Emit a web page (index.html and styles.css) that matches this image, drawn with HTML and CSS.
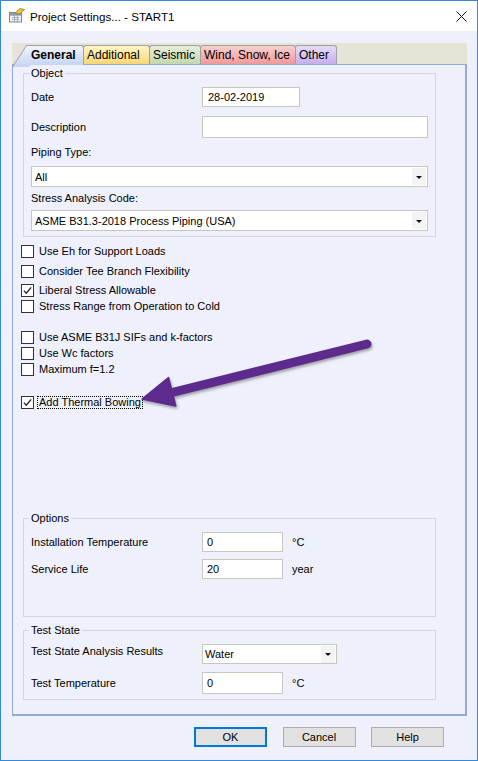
FILE: index.html
```html
<!DOCTYPE html>
<html>
<head>
<meta charset="utf-8">
<title>Project Settings</title>
<link rel="stylesheet" href="styles.css">
</head>
<body>
<div class="window">
  <div class="titlebar">
    <svg class="appicon" viewBox="0 0 17 16" width="17" height="16">
      <rect x="1.5" y="5.5" width="12" height="9.5" fill="#eef0f4" stroke="#7d8593"/>
      <rect x="1.5" y="5.5" width="12" height="2.5" fill="#9aa6b8" stroke="#7d8593"/>
      <path d="M4 10.5h7M4 12.5h7M6.5 8v7M9.5 8v7" stroke="#9aa3b2" stroke-width="0.8"/>
      <path d="M7 6 L12 1.5 L16.5 2.5 L11.5 7 Z" fill="#f2c531" stroke="#a07a12" stroke-width="0.8"/>
    </svg>
    <span class="title">Project Settings... - START1</span>
    <svg class="close" viewBox="0 0 11 11" width="11" height="11">
      <path d="M0.5 0.5L10.5 10.5M10.5 0.5L0.5 10.5" stroke="#111" stroke-width="1"/>
    </svg>
  </div>

  <div class="client">
    <div class="tabstrip">
      <div class="tab tab-general">General</div>
      <div class="tab tab-additional">Additional</div>
      <div class="tab tab-seismic">Seismic</div>
      <div class="tab tab-wind">Wind, Snow, Ice</div>
      <div class="tab tab-other">Other</div>
    </div>

    <div class="panel">
      <fieldset class="group group-object">
        <legend>Object</legend>
        <div class="row row-date">
          <span class="lbl">Date</span>
          <div class="input input-date">28-02-2019</div>
        </div>
        <div class="row row-desc">
          <span class="lbl">Description</span>
          <div class="input input-desc"></div>
        </div>
        <div class="caption caption-piping">Piping Type:</div>
        <div class="select select-wide"><span class="sel-text">All</span><span class="sel-btn"><span class="tri"></span></span></div>
        <div class="caption caption-code">Stress Analysis Code:</div>
        <div class="select select-wide select-code"><span class="sel-text">ASME B31.3-2018 Process Piping (USA)</span><span class="sel-btn"><span class="tri"></span></span></div>
      </fieldset>

      <div class="checks">
        <div class="check c1"><span class="box"></span><span>Use Eh for Support Loads</span></div>
        <div class="check c2"><span class="box"></span><span>Consider Tee Branch Flexibility</span></div>
        <div class="check c3"><span class="box"><svg viewBox="0 0 11 11" width="11" height="11"><path d="M1.8 5.6L4.3 8.2L9.2 2.4" fill="none" stroke="#222" stroke-width="1.3"/></svg></span><span>Liberal Stress Allowable</span></div>
        <div class="check c4"><span class="box"></span><span>Stress Range from Operation to Cold</span></div>
        <div class="check c5"><span class="box"></span><span>Use ASME B31J SIFs and k-factors</span></div>
        <div class="check c6"><span class="box"></span><span>Use Wc factors</span></div>
        <div class="check c7"><span class="box"></span><span>Maximum f=1.2</span></div>
        <div class="check c8"><span class="box"><svg viewBox="0 0 11 11" width="11" height="11"><path d="M1.8 5.6L4.3 8.2L9.2 2.4" fill="none" stroke="#222" stroke-width="1.3"/></svg></span><span class="focus">Add Thermal Bowing</span></div>
      </div>

      <fieldset class="group group-options">
        <legend>Options</legend>
        <div class="row row-install">
          <span class="lbl">Installation Temperature</span>
          <div class="input input-num">0</div>
          <span class="unit">°C</span>
        </div>
        <div class="row row-life">
          <span class="lbl">Service Life</span>
          <div class="input input-num">20</div>
          <span class="unit">year</span>
        </div>
      </fieldset>

      <fieldset class="group group-test">
        <legend>Test State</legend>
        <div class="row row-results">
          <span class="lbl lbl-top">Test State Analysis Results</span>
          <div class="select select-water"><span class="sel-text">Water</span><span class="sel-btn"><span class="tri"></span></span></div>
        </div>
        <div class="row row-testtemp">
          <span class="lbl">Test Temperature</span>
          <div class="input input-num input-tall">0</div>
          <span class="unit">°C</span>
        </div>
      </fieldset>
    </div>

    <div class="buttons">
      <div class="btn btn-default">OK</div>
      <div class="btn">Cancel</div>
      <div class="btn">Help</div>
    </div>
  </div>

  <svg class="arrow" viewBox="0 0 478 761" width="478" height="761">
    <g class="arrow-shape">
      <line x1="367" y1="344" x2="170" y2="393" stroke="#5d2a8d" stroke-width="9" stroke-linecap="round"/>
      <polygon points="142,399 168.5,377.5 175.8,406" fill="#5d2a8d" stroke="#5d2a8d" stroke-width="1.5" stroke-linejoin="round"/>
    </g>
  </svg>
</div>
</body>
</html>
```
FILE: styles.css
```css
* { box-sizing: border-box; }

html, body {
  margin: 0;
  padding: 0;
}

body {
  width: 478px;
  height: 761px;
  overflow: hidden;
  font-family: "Liberation Sans", Arial, sans-serif;
  font-size: 11px;
  color: #000;
  background: #ffffff;
}

.window {
  position: relative;
  width: 478px;
  height: 761px;
  border: 1px solid #3388d8;
  background: #eef0fb;
}

/* title bar */
.titlebar {
  height: 30px;
  background: #ffffff;
  display: flex;
  align-items: center;
  padding-left: 7px;
}

.appicon {
  display: block;
  margin-right: 5px;
  margin-top: -2px;
}

.title {
  flex: 1;
  font-size: 11.6px;
  color: #000;
}

.close {
  display: block;
  margin-right: 10px;
}

/* client area */
.client {
  padding: 12px 10px 0 11px;
}

.tabstrip {
  height: 21px;
  width: 455px;
  background: #e4e4d7;
  display: flex;
  align-items: flex-end;
}

.tab {
  height: 19px;
  border: 1px solid #9fa0a0;
  border-bottom: none;
  border-radius: 3px 3px 0 0;
  font-size: 12px;
  line-height: 18px;
  padding-left: 3px;
  margin-left: -1px;
  white-space: nowrap;
}

.tab-general {
  position: relative;
  z-index: 1;
  margin-left: 14px;
  width: 58px;
  height: 20px;
  margin-bottom: -1px;
  padding-left: 5px;
  font-weight: bold;
  border-left: none;
  border-radius: 0 3px 0 0;
  background: linear-gradient(to bottom, #f1f4fc, #c5d5f2);
}

.tab-general::before {
  content: "";
  position: absolute;
  left: -14px;
  top: -1px;
  width: 16px;
  height: 21px;
  border-left: 1px solid #9fa0a0;
  border-top: 1px solid #9fa0a0;
  background: linear-gradient(to bottom, #f1f4fc, #c5d5f2);
  transform-origin: bottom left;
  transform: skewX(-33deg);
  z-index: -1;
}

.tab-additional {
  width: 67px;
  background: linear-gradient(to bottom, #fff6c6, #f9d673);
}

.tab-seismic {
  width: 52px;
  background: linear-gradient(to bottom, #e4eddb, #c3d8ad);
}

.tab-wind {
  width: 96px;
  background: linear-gradient(to bottom, #fad0d0, #f09999);
}

.tab-other {
  width: 42px;
  background: linear-gradient(to bottom, #e6dcf7, #c5afeb);
}

.panel {
  width: 455px;
  height: 652px;
  border: 1px solid #93a9d6;
  border-right-width: 2px;
  border-bottom-width: 2px;
  background: #eef0fb;
  padding: 1px 0 0 10px;
}

/* group boxes */
.group {
  margin: 0;
  width: 413px;
  min-width: 0;
  border: 1px solid #d2d5dd;
  padding: 7px 7px 5px 7px;
}

.group legend {
  padding: 0 2px;
  margin-left: -2px;
  line-height: 14px;
  font-size: 11px;
}

.row {
  display: flex;
  align-items: center;
}

.lbl {
  width: 171px;
  flex: none;
}

.lbl-top {
  align-self: flex-start;
  line-height: 14px;
}

.input {
  background: #ffffff;
  border: 1px solid #c7c8bc;
  height: 20px;
  padding-left: 5px;
  display: flex;
  align-items: center;
  flex: none;
}

.input-date { width: 98px; }

.row-desc { margin-top: 9px; }
.input-desc { width: 226px; height: 22px; }

.caption {
  line-height: 14px;
  height: 14px;
}

.caption-piping { margin-top: 7px; }
.caption-code { margin-top: 4px; }

.select {
  height: 21px;
  background: #ffffff;
  border: 1px solid #c7c8bc;
  display: flex;
  align-items: center;
}

.select-wide {
  width: 397px;
  margin-top: 7px;
}

.select-code { margin-top: 5px; }

.sel-text {
  flex: 1;
  padding-left: 3px;
  white-space: nowrap;
}

.sel-btn {
  width: 14px;
  height: 17px;
  margin-right: 1px;
  background: #f3f3f3;
  display: flex;
  align-items: center;
  justify-content: center;
}

.tri {
  width: 0;
  height: 0;
  border-left: 3px solid transparent;
  border-right: 3px solid transparent;
  border-top: 3px solid #111;
  margin-top: 1px;
}

/* checkboxes */
.checks {
  margin-left: -2px;
}

.check {
  display: flex;
  align-items: center;
  height: 13px;
  line-height: 13px;
  white-space: nowrap;
}

.box {
  width: 13px;
  height: 13px;
  flex: none;
  border: 1px solid #333333;
  background: #ffffff;
  margin-right: 5px;
  display: block;
}

.box svg { display: block; }

.c1 { margin-top: 8px; }
.c2 { margin-top: 7px; }
.c3 { margin-top: 6px; }
.c4 { margin-top: 3px; }
.c5 { margin-top: 18px; }
.c6 { margin-top: 3px; }
.c7 { margin-top: 3px; }
.c8 { margin-top: 20px; }

.focus {
  border: 1px dotted #000;
  padding: 0 1px;
  margin-left: -2px;
  line-height: 11px;
  height: 13px;
}

/* options */
.group-options {
  margin-top: 102px;
  padding-bottom: 37px;
}

.input-num {
  width: 81px;
  padding-left: 4px;
}

.unit {
  margin-left: 9px;
}

.row-life { margin-top: 7px; }

.group-test {
  margin-top: 6px;
}

.select-water {
  width: 135px;
  height: 20px;
}

.select-water .sel-text { padding-left: 2px; }

.row-testtemp { margin-top: 8px; }
.input-tall { height: 22px; }

/* buttons */
.buttons {
  display: flex;
  justify-content: flex-end;
  gap: 15.5px;
  margin-top: 11px;
  padding-right: 23px;
}

.btn {
  width: 73px;
  height: 20px;
  background: #e1e1e1;
  border: 1px solid #adadad;
  display: flex;
  align-items: center;
  justify-content: center;
  font-size: 11px;
}

.btn-default {
  border: 2px solid #0078d7;
}

/* annotation arrow overlay */
.arrow {
  position: absolute;
  left: -1px;
  top: -1px;
  pointer-events: none;
}

.arrow-shape {
  filter: drop-shadow(1px 2px 1.5px rgba(0, 0, 0, 0.35));
}
```
